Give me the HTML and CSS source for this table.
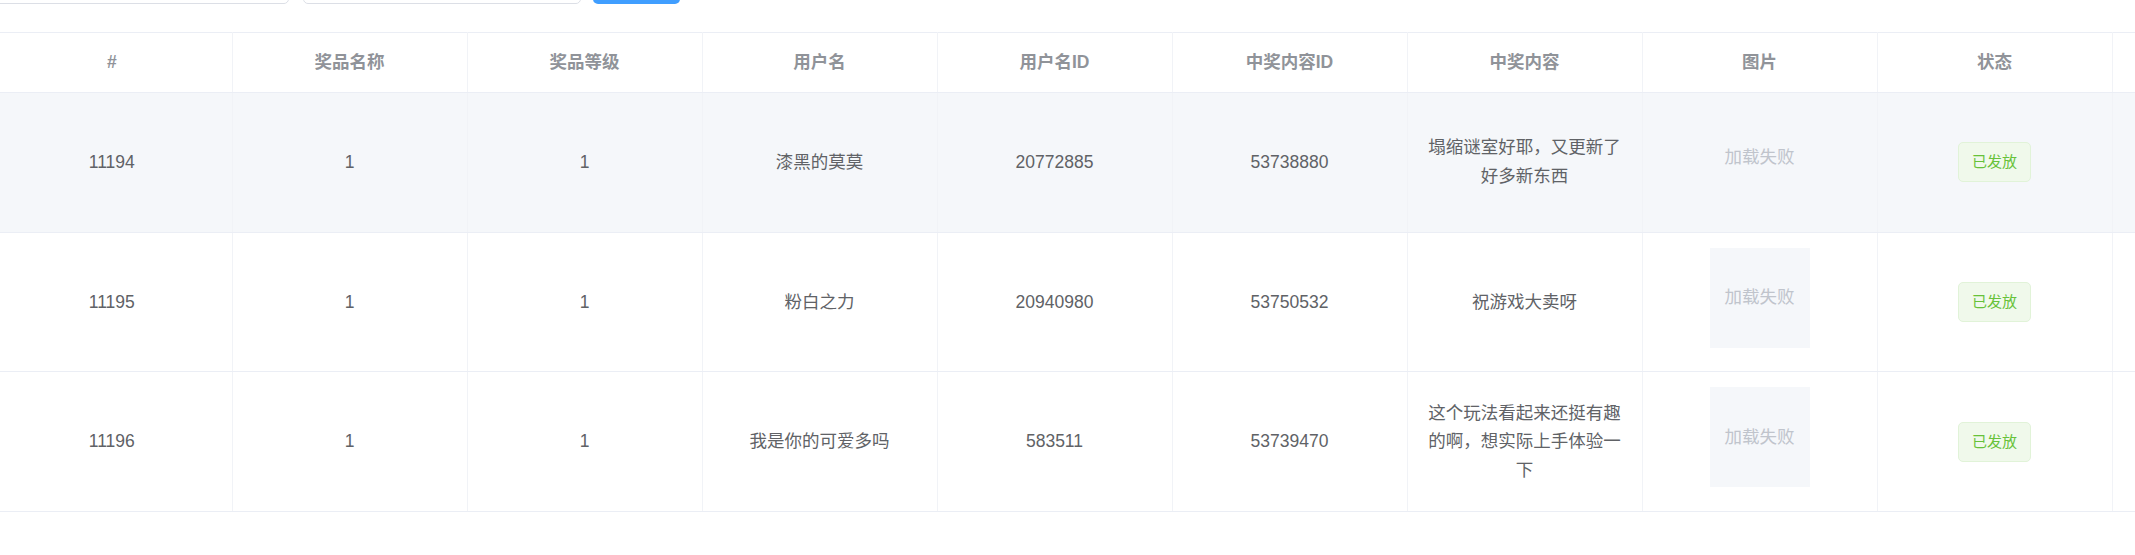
FILE: index.html
```html
<!DOCTYPE html>
<html lang="zh-CN">
<head>
    <meta charset="UTF-8">
    <title>中奖记录</title>
    <link rel="stylesheet" href="styles.css">
</head>
<body>
<div class="toolbar">
    <div class="input first"></div>
    <div class="input"></div>
    <div class="btn"></div>
</div>
<div class="table-wrap">
    <table class="prize-table">
        <colgroup>
            <col class="col-first">
            <col><col><col><col><col><col><col><col><col>
        </colgroup>
        <thead>
        <tr>
            <th><div class="cell">#</div></th>
            <th><div class="cell">奖品名称</div></th>
            <th><div class="cell">奖品等级</div></th>
            <th><div class="cell">用户名</div></th>
            <th><div class="cell">用户名ID</div></th>
            <th><div class="cell">中奖内容ID</div></th>
            <th><div class="cell">中奖内容</div></th>
            <th><div class="cell">图片</div></th>
            <th><div class="cell">状态</div></th>
            <th><div class="cell"></div></th>
        </tr>
        </thead>
        <tbody>
        <tr class="hover">
            <td><div class="cell">11194</div></td>
            <td><div class="cell">1</div></td>
            <td><div class="cell">1</div></td>
            <td><div class="cell">漆黑的莫莫</div></td>
            <td><div class="cell">20772885</div></td>
            <td><div class="cell">53738880</div></td>
            <td><div class="cell">塌缩谜室好耶，又更新了好多新东西</div></td>
            <td><div class="cell"><div class="image"><div class="image-error">加载失败</div></div></div></td>
            <td><div class="cell"><span class="tag">已发放</span></div></td>
            <td><div class="cell"></div></td>
        </tr>
        <tr>
            <td><div class="cell">11195</div></td>
            <td><div class="cell">1</div></td>
            <td><div class="cell">1</div></td>
            <td><div class="cell">粉白之力</div></td>
            <td><div class="cell">20940980</div></td>
            <td><div class="cell">53750532</div></td>
            <td><div class="cell">祝游戏大卖呀</div></td>
            <td><div class="cell"><div class="image"><div class="image-error">加载失败</div></div></div></td>
            <td><div class="cell"><span class="tag">已发放</span></div></td>
            <td><div class="cell"></div></td>
        </tr>
        <tr>
            <td><div class="cell">11196</div></td>
            <td><div class="cell">1</div></td>
            <td><div class="cell">1</div></td>
            <td><div class="cell">我是你的可爱多吗</div></td>
            <td><div class="cell">583511</div></td>
            <td><div class="cell">53739470</div></td>
            <td><div class="cell">这个玩法看起来还挺有趣的啊，想实际上手体验一下</div></td>
            <td><div class="cell"><div class="image"><div class="image-error">加载失败</div></div></div></td>
            <td><div class="cell"><span class="tag">已发放</span></div></td>
            <td><div class="cell"></div></td>
        </tr>
        </tbody>
    </table>
</div>
</body>
</html>
```

FILE: styles.css
```css
html,body{overflow:hidden;}
body{margin:0;background:#fff;font-family:"Liberation Sans","Noto Sans CJK SC",sans-serif;color:#606266;}

/* search bar, only its bottom edge is in view */
.toolbar{display:flex;align-items:flex-end;height:4px;overflow:hidden;margin-bottom:28px;}
.input{width:278px;height:40px;flex:none;box-sizing:border-box;border:1px solid #dcdfe6;border-radius:5px;background:#fff;margin-right:12px;}
.input.first{width:302px;margin-left:-13px;margin-right:14px;}
.btn{width:87px;height:40px;flex:none;border-radius:5px;background:#409eff;}

.table-wrap{overflow:hidden;}
.prize-table{margin-left:-8px;width:2355px;table-layout:fixed;border-collapse:collapse;border-top:1px solid #ebeef5;font-size:17.5px;}
.prize-table col{width:235px;}
.prize-table col.col-first{width:240px;}
.prize-table th,.prize-table td{padding:15px 0;border-bottom:1px solid #ebeef5;border-right:1px solid #f1f3f7;text-align:center;vertical-align:middle;}
.prize-table th{color:#909399;font-weight:bold;}
.prize-table .cell{padding:0 12.5px;line-height:28.75px;word-break:break-all;}
.prize-table tr.hover td{background:#f5f7fa;}

.image{display:inline-block;width:100px;height:100px;overflow:hidden;vertical-align:baseline;}
.image-error{display:flex;align-items:center;justify-content:center;width:100%;height:100%;background:#f5f7fa;color:#c0c4cc;font-size:17.5px;}

.tag{display:inline-block;height:40px;box-sizing:border-box;padding:0 12.5px;line-height:38px;font-size:15px;color:#67c23a;background:#f0f9eb;border:1px solid #e1f3d8;border-radius:5px;white-space:nowrap;vertical-align:middle;}
```
